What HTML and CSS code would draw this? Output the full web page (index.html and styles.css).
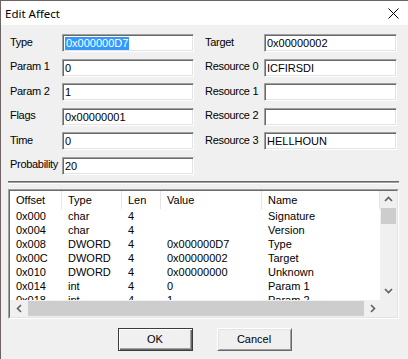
FILE: index.html
```html
<!DOCTYPE html>
<html lang="en">
<head>
  <meta charset="UTF-8" />
  <title>Edit Affect</title>
  <link rel="stylesheet" href="styles.css">
</head>
<body>
  <div class="window">
    <header class="titlebar">
      <span class="title">Edit Affect</span>
      <svg class="close" width="11" height="11" viewBox="0 0 11 11">
        <path d="M0.5 0.5 L10.5 10.5 M10.5 0.5 L0.5 10.5" stroke="#000" stroke-width="1" fill="none"/>
      </svg>
    </header>

    <section class="fields">
      <span class="lbl">Type</span>
      <div class="edit"><span class="sel">0x000000D7</span></div>
      <span class="lbl rl">Target</span>
      <div class="edit">0x00000002</div>

      <span class="lbl">Param 1</span>
      <div class="edit">0</div>
      <span class="lbl rl">Resource 0</span>
      <div class="edit">ICFIRSDI</div>

      <span class="lbl">Param 2</span>
      <div class="edit">1</div>
      <span class="lbl rl">Resource 1</span>
      <div class="edit"></div>

      <span class="lbl">Flags</span>
      <div class="edit">0x00000001</div>
      <span class="lbl rl">Resource 2</span>
      <div class="edit"></div>

      <span class="lbl">Time</span>
      <div class="edit">0</div>
      <span class="lbl rl">Resource 3</span>
      <div class="edit">HELLHOUN</div>

      <span class="lbl">Probability</span>
      <div class="edit">20</div>
    </section>

    <div class="rule"></div>

    <!-- structure list -->
    <div class="list">
      <div class="list-inner">
        <div class="view">
          <div class="row head">
            <span>Offset</span><span>Type</span><span>Len</span><span>Value</span><span>Name</span>
          </div>
          <div class="row"><span>0x000</span><span>char</span><span>4</span><span></span><span>Signature</span></div>
          <div class="row"><span>0x004</span><span>char</span><span>4</span><span></span><span>Version</span></div>
          <div class="row"><span>0x008</span><span>DWORD</span><span>4</span><span>0x000000D7</span><span>Type</span></div>
          <div class="row"><span>0x00C</span><span>DWORD</span><span>4</span><span>0x00000002</span><span>Target</span></div>
          <div class="row"><span>0x010</span><span>DWORD</span><span>4</span><span>0x00000000</span><span>Unknown</span></div>
          <div class="row"><span>0x014</span><span>int</span><span>4</span><span>0</span><span>Param 1</span></div>
          <div class="row"><span>0x018</span><span>int</span><span>4</span><span>1</span><span>Param 2</span></div>
        </div>

        <div class="vscroll">
          <div class="sb-btn">
            <svg width="9" height="6" viewBox="0 0 9 6"><path d="M1 5 L4.5 1.5 L8 5" stroke="#606060" stroke-width="1.6" fill="none"/></svg>
          </div>
          <div class="vtrack"><div class="vthumb"></div></div>
          <div class="sb-btn">
            <svg width="9" height="6" viewBox="0 0 9 6"><path d="M1 1 L4.5 4.5 L8 1" stroke="#606060" stroke-width="1.6" fill="none"/></svg>
          </div>
        </div>

        <div class="hscroll">
          <div class="sb-btn">
            <svg width="6" height="9" viewBox="0 0 6 9"><path d="M5 1 L1.5 4.5 L5 8" stroke="#606060" stroke-width="1.6" fill="none"/></svg>
          </div>
          <div class="htrack"><div class="hthumb"></div></div>
          <div class="sb-btn">
            <svg width="6" height="9" viewBox="0 0 6 9"><path d="M1 1 L4.5 4.5 L1 8" stroke="#606060" stroke-width="1.6" fill="none"/></svg>
          </div>
        </div>

        <div class="corner"></div>
      </div>
    </div>

    <footer class="buttons">
      <button class="btn default">OK</button>
      <button class="btn">Cancel</button>
    </footer>
  </div>
</body>
</html>
```

FILE: styles.css
```css
:root {
  --face: #f0f0f0;
  --shadow: #a0a0a0;
  --dark: #696969;
  --light: #e3e3e3;
}

* {
  box-sizing: border-box;
}

html, body {
  margin: 0;
  background: var(--face);
  font-family: 'Liberation Sans', Arial, sans-serif;
  font-size: 11px;
  color: #000;
}

.window {
  width: 408px;
  height: 359px;
  background: var(--face);
  border-left: 1px solid #6f6262;
  border-top: 1px solid #6f6262;
  overflow: hidden;
}

.titlebar {
  height: 24px;
  background: #fff;
  display: flex;
  align-items: center;
  justify-content: space-between;
  padding: 0 9px 0 4px;
}

.title {
  font-family: 'Noto Sans', sans-serif;
  font-size: 11.5px;
}

.close {
  display: block;
}

.fields {
  display: grid;
  grid-template-columns: 52px 132px 70px 133px;
  grid-template-rows: repeat(6, 18px);
  row-gap: 6.6px;
  padding: 9px 0 0 9px;
  align-items: center;
}

.lbl {
  white-space: nowrap;
  margin-top: -3px;
  letter-spacing: -0.3px;
}

.lbl.rl {
  padding-left: 11px;
}

.edit {
  height: 18px;
  background: #fff;
  border: 1px solid;
  border-color: var(--shadow) #fff #fff var(--shadow);
  box-shadow: inset 1px 1px var(--dark), inset -1px -1px var(--light);
  padding: 1px 0 0 2px;
  line-height: 15px;
  white-space: nowrap;
}

.sel {
  background: #3399ff;
  color: #fff;
  display: inline-block;
  line-height: 13px;
  padding: 0 1px;
}

.rule {
  margin: 6px 0 0 7px;
  width: 391px;
  border-top: 1px solid var(--dark);
  border-bottom: 1px solid var(--shadow);
  box-shadow: 0 1px #fff;
}

.list {
  margin: 6px 0 0 7px;
  width: 391px;
  height: 130px;
  border: 1px solid;
  border-color: var(--shadow) #fff #fff var(--shadow);
}

.list-inner {
  height: 100%;
  border: 1px solid;
  border-color: var(--dark) var(--light) var(--light) var(--dark);
  background: #fff;
  display: grid;
  grid-template-columns: 370px 17px;
  grid-template-rows: 109px 17px;
}

.view {
  overflow: hidden;
  background: #fff;
}

.row {
  display: grid;
  grid-template-columns: 52px 60px 39px 101px 118px;
  height: 14px;
  line-height: 14px;
}

.row span {
  padding-left: 6px;
  white-space: nowrap;
}

.row.head {
  height: 18px;
  line-height: 18px;
}

.row.head span {
  border-right: 1px solid #e5e5e5;
}

.vscroll {
  display: flex;
  flex-direction: column;
  background: var(--face);
}

.hscroll {
  display: flex;
  background: var(--face);
}

.sb-btn {
  width: 17px;
  height: 17px;
  flex: none;
  display: flex;
  align-items: center;
  justify-content: center;
}

.vtrack {
  flex: 1;
  padding: 0 1px;
}

.vthumb {
  height: 16px;
  background: #cdcdcd;
}

.htrack {
  flex: 1;
  padding: 1px 0;
}

.hthumb {
  width: 336px;
  height: 100%;
  margin-left: 1px;
  background: #cdcdcd;
}

.corner {
  background: var(--face);
}

.buttons {
  display: flex;
  justify-content: center;
  gap: 24px;
  margin-top: 9px;
}

.btn {
  width: 75px;
  height: 23px;
  font-family: 'Liberation Sans', Arial, sans-serif;
  font-size: 11px;
  color: #000;
  background: var(--face);
  border: 1px solid;
  border-color: #fff var(--dark) var(--dark) #fff;
  box-shadow: inset 1px 1px var(--light), inset -1px -1px var(--shadow);
  padding: 0;
}

.btn.default {
  border-color: #3c3c3c;
  box-shadow: inset 1px 1px #fff, inset -1px -1px var(--dark), inset -2px -2px var(--shadow);
}
```
